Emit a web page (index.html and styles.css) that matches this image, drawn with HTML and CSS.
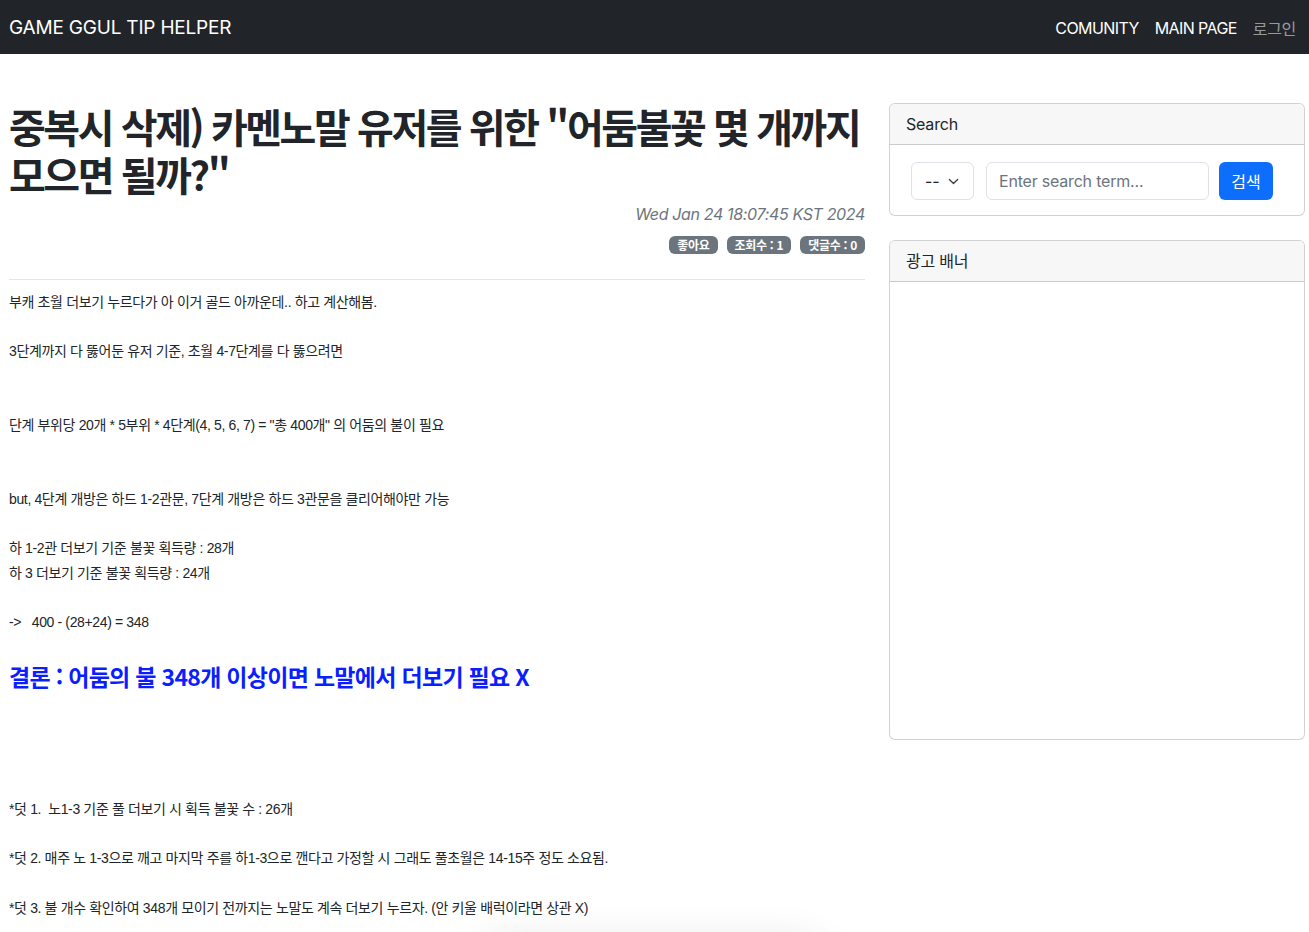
FILE: index.html
```html
<!DOCTYPE html>
<html lang="ko">
<head>
<meta charset="utf-8">
<title>GAME GGUL TIP HELPER</title>
<link rel="stylesheet" href="styles.css">
</head>
<body>
<nav class="navbar">
  <a class="brand" href="#">GAME GGUL TIP HELPER</a>
  <ul class="nav-links">
    <li><a class="nav-link active" href="#">COMUNITY</a></li>
    <li><a class="nav-link active" href="#">MAIN PAGE</a></li>
    <li><a class="nav-link muted" href="#">로그인</a></li>
  </ul>
</nav>

<div class="page">
  <main class="post">
    <header class="post-header">
      <h1 class="post-title">중복시 삭제) 카멘노말 유저를 위한 "어둠불꽃 몇 개까지 모으면 될까?"</h1>
      <div class="post-date">Wed Jan 24 18:07:45 KST 2024</div>
      <div class="badges">
        <span class="badge">좋아요</span>
        <span class="badge">조회수 : 1</span>
        <span class="badge">댓글수 : 0</span>
      </div>
    </header>
    <hr class="divider">
    <section class="content">
      <p class="ln">부캐 초월 더보기 누르다가 아 이거 골드 아까운데.. 하고 계산해봄.</p>
      <p class="ln"><br></p>
      <p class="ln">3단계까지 다 뚫어둔 유저 기준, 초월 4-7단계를 다 뚫으려면</p>
      <p class="ln"><br></p>
      <p class="ln"><br></p>
      <p class="ln">단계 부위당 20개 * 5부위 * 4단계(4, 5, 6, 7) = "총 400개" 의 어둠의 불이 필요</p>
      <p class="ln"><br></p>
      <p class="ln"><br></p>
      <p class="ln">but, 4단계 개방은 하드 1-2관문, 7단계 개방은 하드 3관문을 클리어해야만 가능</p>
      <p class="ln"><br></p>
      <p class="ln">하 1-2관 더보기 기준 불꽃 획득량 : 28개</p>
      <p class="ln">하 3 더보기 기준 불꽃 획득량 : 24개</p>
      <p class="ln"><br></p>
      <p class="ln">-&gt;&nbsp;&nbsp; 400 - (28+24) = 348</p>
      <p class="ln"><br></p>
      <p class="conclusion">결론 : 어둠의 불 348개 이상이면 노말에서 더보기 필요 X</p>
      <p class="ln"><br></p>
      <p class="ln"><br></p>
      <p class="ln"><br></p>
      <p class="ln"><br></p>
      <p class="ln">*덧 1.&nbsp; 노1-3 기준 풀 더보기 시 획득 불꽃 수 : 26개</p>
      <p class="ln"><br></p>
      <p class="ln">*덧 2. 매주 노 1-3으로 깨고 마지막 주를 하1-3으로 깬다고 가정할 시 그래도 풀초월은 14-15주 정도 소요됨.</p>
      <p class="ln"><br></p>
      <p class="ln">*덧 3. 불 개수 확인하여 348개 모이기 전까지는 노말도 계속 더보기 누르자. (안 키울 배럭이라면 상관 X)</p>
    </section>
  </main>

  <aside class="sidebar">
    <div class="card">
      <div class="card-header">Search</div>
      <div class="card-body search-body">
        <div class="select">
          <span>--</span>
          <svg class="chev" width="11" height="11" viewBox="0 0 16 16"><path d="M2 5l6 6 6-6" fill="none" stroke="#343a40" stroke-width="1.8" stroke-linecap="round" stroke-linejoin="round"/></svg>
        </div>
        <div class="input">Enter search term...</div>
        <button class="btn">검색</button>
      </div>
    </div>
    <div class="card">
      <div class="card-header">광고 배너</div>
      <div class="card-body ad-body"></div>
    </div>
  </aside>
</div>
<div class="floating-shadow"></div>
</body>
</html>
```

FILE: styles.css
```css
* { box-sizing: border-box; }
html, body { margin: 0; padding: 0; }
body {
  background: #fff;
  color: #212529;
  font-family: Inter, "Liberation Sans", "Noto Sans CJK KR", sans-serif;
  font-size: 16px;
  overflow: hidden;
}

.navbar {
  height: 54px;
  background: #212529;
  display: flex;
  align-items: center;
  justify-content: space-between;
  padding: 2px 5px 0 9px;
}
.brand {
  color: #fff;
  text-decoration: none;
  font-size: 19px;
  letter-spacing: -0.2px;
  line-height: 24px;
}
.nav-links {
  display: flex;
  align-items: center;
  list-style: none;
  margin: 0;
  padding: 0;
}
.nav-link {
  display: block;
  padding: 0 8px;
  text-decoration: none;
  font-size: 16px;
  line-height: 24px;
  letter-spacing: -0.6px;
}
.nav-link.active { color: #fff; }
.nav-link.muted { color: rgba(255,255,255,0.55); font-family: "Noto Sans CJK KR", sans-serif; letter-spacing: -0.3px; }

.page {
  display: grid;
  grid-template-columns: minmax(0, 856fr) minmax(0, 416fr);
  column-gap: 24px;
  padding: 48px 4px 0 9px;
}

.post-title {
  margin: 0 0 4px;
  font-family: "Noto Sans CJK KR", sans-serif;
  font-weight: 700;
  font-size: 40px;
  line-height: 48px;
  letter-spacing: -2.45px;
  color: #212529;
}
.post-date {
  text-align: right;
  color: #6c757d;
  font-style: italic;
  font-size: 16px;
  line-height: 24px;
  letter-spacing: -0.35px;
  margin-bottom: 8px;
}
.badges {
  display: flex;
  justify-content: flex-end;
  gap: 9px;
  height: 22px;
  align-items: center;
}
.badge {
  background: #6c757d;
  color: #fff;
  font-size: 12px;
  font-weight: 700;
  border-radius: 6px;
  padding: 0 8px;
  height: 18px;
  line-height: 18px;
  font-family: "Noto Sans CJK KR", sans-serif;
  letter-spacing: -0.3px;
}
.divider {
  border: 0;
  border-top: 1px solid #e5e5e5;
  margin: 23px 0 10px;
}

.content {
  font-family: "Liberation Sans", "Noto Sans CJK KR", sans-serif;
  font-size: 14px;
  letter-spacing: -0.36px;
  color: #212529;
}
.ln {
  margin: 0;
  line-height: 24.65px;
  height: 24.65px;
  white-space: nowrap;
}
.conclusion {
  margin: -2px 0 5px;
  height: 36px;
  line-height: 36px;
  font-family: "Noto Sans CJK KR", sans-serif;
  font-weight: 700;
  font-size: 23px;
  letter-spacing: -0.7px;
  color: #0a1eff;
  white-space: nowrap;
}

.sidebar { display: flex; flex-direction: column; gap: 24px; margin-top: 1px; }
.card {
  border: 1px solid rgba(0,0,0,0.175);
  border-radius: 6px;
  overflow: hidden;
  background: #fff;
}
.card-header {
  height: 41px;
  padding: 0 16px;
  line-height: 41px;
  background: #f7f7f7;
  border-bottom: 1px solid rgba(0,0,0,0.175);
  font-size: 16px;
  letter-spacing: -0.2px;
  color: #212529;
}
.search-body {
  display: flex;
  align-items: center;
  padding: 17px 21px 15px;
}
.select {
  width: 63px;
  height: 38px;
  border: 1px solid #dee2e6;
  border-radius: 6px;
  display: flex;
  align-items: center;
  justify-content: space-between;
  padding: 0 14px 0 13px;
  font-size: 16px;
}
.chev { display: block; }
.input {
  margin-left: 12px;
  width: 223px;
  height: 38px;
  border: 1px solid #dee2e6;
  border-radius: 6px;
  padding: 0 12px;
  line-height: 36px;
  color: #6c757d;
  font-size: 16px;
  letter-spacing: -0.2px;
}
.btn {
  margin-left: 10px;
  width: 54px;
  height: 38px;
  border: 0;
  border-radius: 6px;
  background: #0d6efd;
  color: #fff;
  font-family: "Noto Sans CJK KR", sans-serif;
  font-size: 16px;
  padding: 0;
}
.ad-body { height: 457px; }

.floating-shadow {
  position: fixed;
  left: 480px;
  width: 340px;
  top: 952px;
  height: 60px;
  border-radius: 30px;
  box-shadow: 0 0 40px 10px rgba(0,0,0,0.12);
}
```
